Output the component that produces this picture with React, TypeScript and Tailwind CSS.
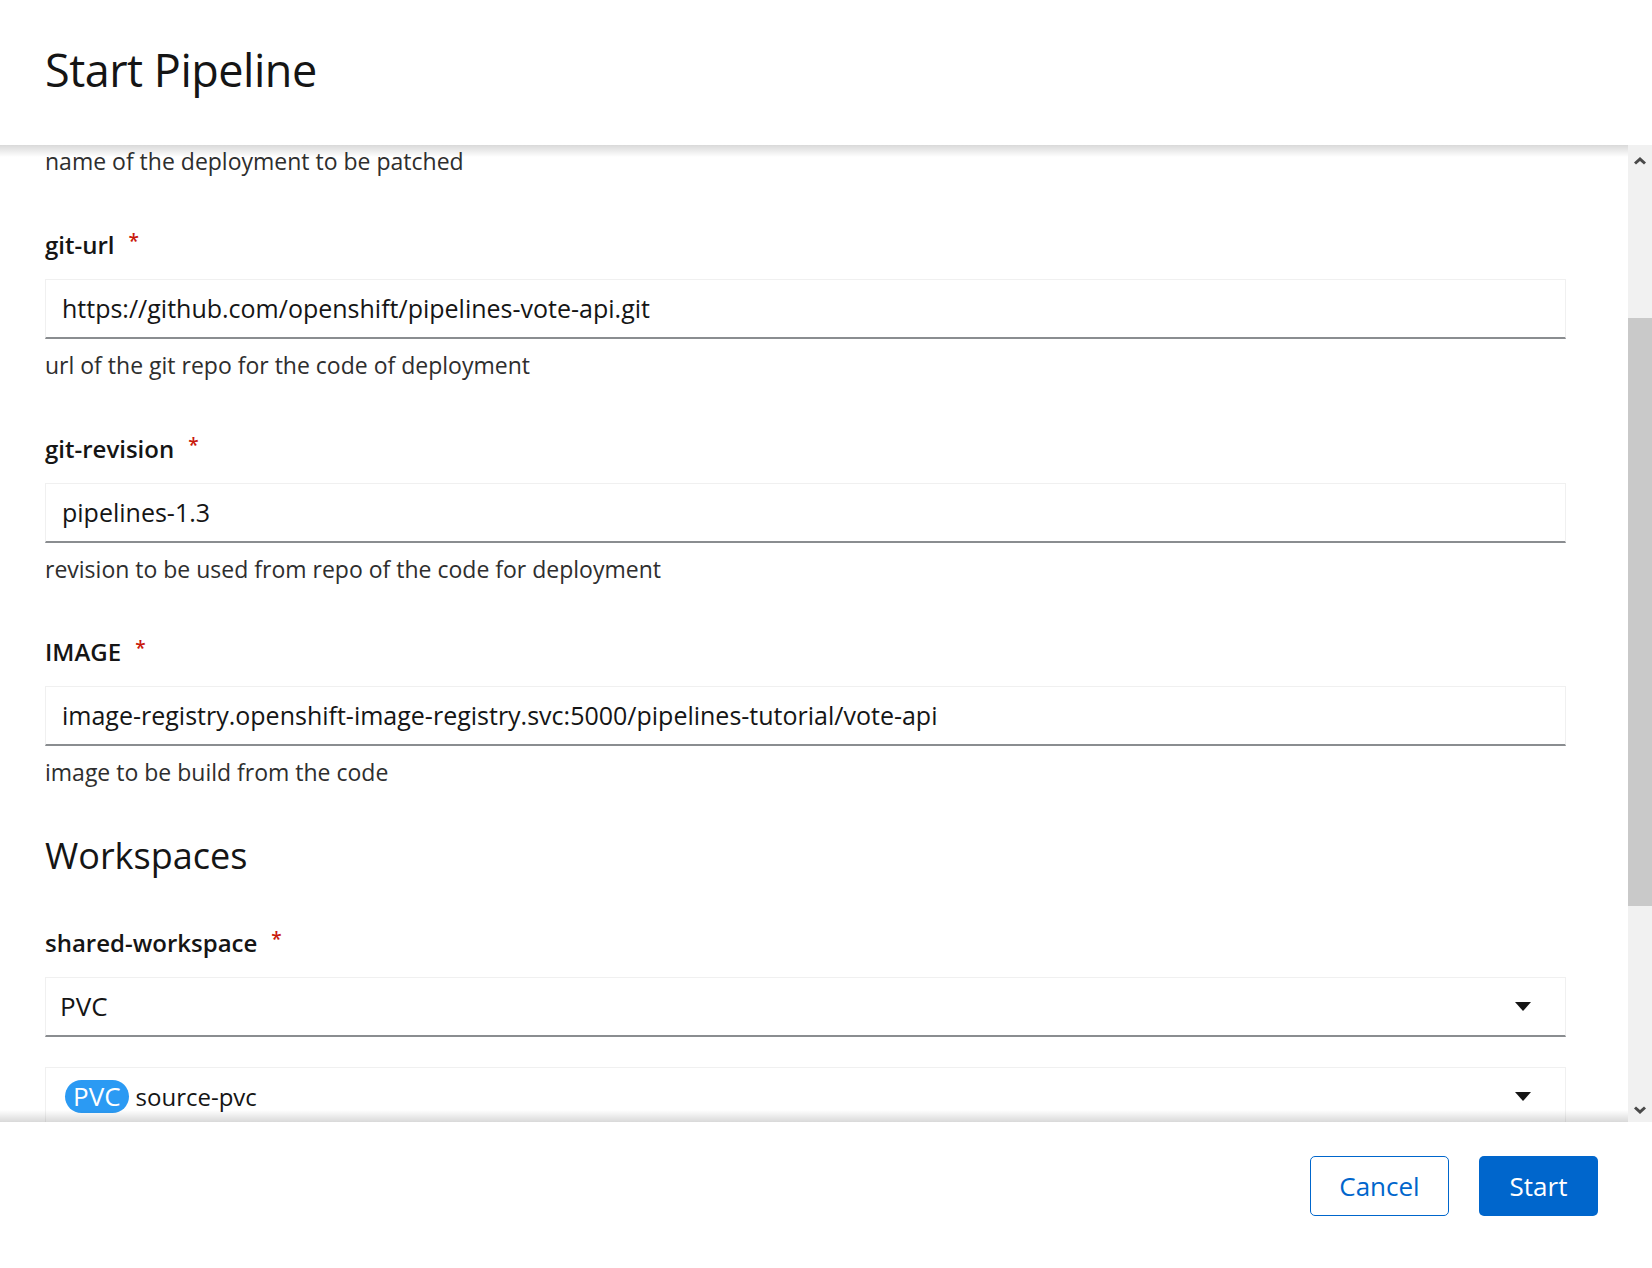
import { ReactNode } from 'react';

const font = { fontFamily: '"Open Sans", "Liberation Sans", sans-serif' };

function Label({ children }: { children: ReactNode }) {
  return (
    <div className="flex items-start text-[24px] leading-[33px] font-semibold text-[#151515]">
      <span>{children}</span>
      <span className="ml-[14px] text-[19px] leading-[26px] text-[#c9190b]">*</span>
    </div>
  );
}

function TextField({ value }: { value: string }) {
  return (
    <div className="mt-[18px] h-[60px] flex items-center px-[16px] bg-white border border-[#f0f0f0] border-b-2 border-b-[#8a8d90] text-[25px] text-[#151515]">
      {value}
    </div>
  );
}

function Help({ children }: { children: ReactNode }) {
  return <p className="mt-[10px] text-[23px] leading-[33px] text-[#2e2e2e]">{children}</p>;
}

function Caret() {
  return (
    <svg width="16" height="9" viewBox="0 0 16 9" className="shrink-0">
      <polygon points="0,0 16,0 8,9" fill="#151515" />
    </svg>
  );
}

export default function App() {
  return (
    <div className="h-screen w-full flex flex-col bg-white overflow-hidden" style={font}>
      {/* Header */}
      <div className="h-[145px] shrink-0 flex items-center px-[45px] pb-[6px]">
        <h1 className="text-[45px] leading-none font-normal text-[#151515] tracking-[-0.5px]">Start Pipeline</h1>
      </div>

      {/* Body */}
      <div className="flex-1 flex min-h-0">
        <div className="relative flex-1 overflow-hidden">
          <div className="absolute top-0 left-0 right-0 h-[12px] bg-gradient-to-b from-black/15 to-transparent z-10" />
          <div className="pl-[45px] pr-[62px]">
            <p className="text-[23px] leading-[33px] text-[#2e2e2e]">name of the deployment to be patched</p>

            <div className="mt-[50px]">
              <Label>git-url</Label>
              <TextField value="https://github.com/openshift/pipelines-vote-api.git" />
              <Help>url of the git repo for the code of deployment</Help>
            </div>

            <div className="mt-[50px]">
              <Label>git-revision</Label>
              <TextField value="pipelines-1.3" />
              <Help>revision to be used from repo of the code for deployment</Help>
            </div>

            <div className="mt-[49px]">
              <Label>IMAGE</Label>
              <TextField value="image-registry.openshift-image-registry.svc:5000/pipelines-tutorial/vote-api" />
              <Help>image to be build from the code</Help>
            </div>

            <h2 className="mt-[43px] text-[36px] leading-[48px] font-normal text-[#151515]">Workspaces</h2>

            <div className="mt-[46px]">
              <Label>shared-workspace</Label>
              <div className="mt-[18px] h-[60px] flex items-center justify-between pl-[14px] pr-[34px] bg-white border border-[#f0f0f0] border-b-2 border-b-[#8a8d90] text-[25px] text-[#151515]">
                <span className="text-[26px]">PVC</span>
                <Caret />
              </div>
              <div className="mt-[30px] h-[60px] flex items-center justify-between pl-[19px] pr-[34px] bg-white border border-[#f0f0f0] border-b-2 border-b-[#8a8d90] text-[24px] text-[#151515]">
                <span className="flex items-center gap-[7px]">
                  <span className="h-[33px] px-[8px] rounded-full bg-[#2b9af3] text-white text-[26px] leading-[33px]">PVC</span>
                  <span>source-pvc</span>
                </span>
                <Caret />
              </div>
            </div>
          </div>
          <div className="absolute bottom-0 left-0 right-0 h-[12px] bg-gradient-to-t from-black/15 to-transparent z-10" />
        </div>

        {/* Scrollbar */}
        <div className="w-[24px] shrink-0 flex flex-col bg-[#f1f1f1]">
          <div className="h-[32px] flex items-center justify-center">
            <svg width="12" height="8" viewBox="0 0 12 8">
              <polygon points="6,0 12,5.5 10,7.5 6,4 2,7.5 0,5.5" fill="#4a4a4a" />
            </svg>
          </div>
          <div className="h-[141px]" />
          <div className="h-[588px] bg-[#c9c9c9]" />
          <div className="flex-1" />
          <div className="h-[24px] flex items-center justify-center">
            <svg width="12" height="8" viewBox="0 0 12 8">
              <polygon points="6,8 12,2.5 10,0.5 6,4 2,0.5 0,2.5" fill="#4a4a4a" />
            </svg>
          </div>
        </div>
      </div>

      {/* Footer */}
      <div className="h-[146px] shrink-0 flex justify-end items-start gap-[30px] pt-[34px] pr-[54px]">
        <button className="w-[139px] h-[60px] rounded-[5px] border-[1.5px] border-[#0066cc] text-[#0066cc] text-[26px] bg-white">
          Cancel
        </button>
        <button className="w-[119px] h-[60px] rounded-[5px] bg-[#0066cc] text-white text-[26px]">Start</button>
      </div>
    </div>
  );
}
